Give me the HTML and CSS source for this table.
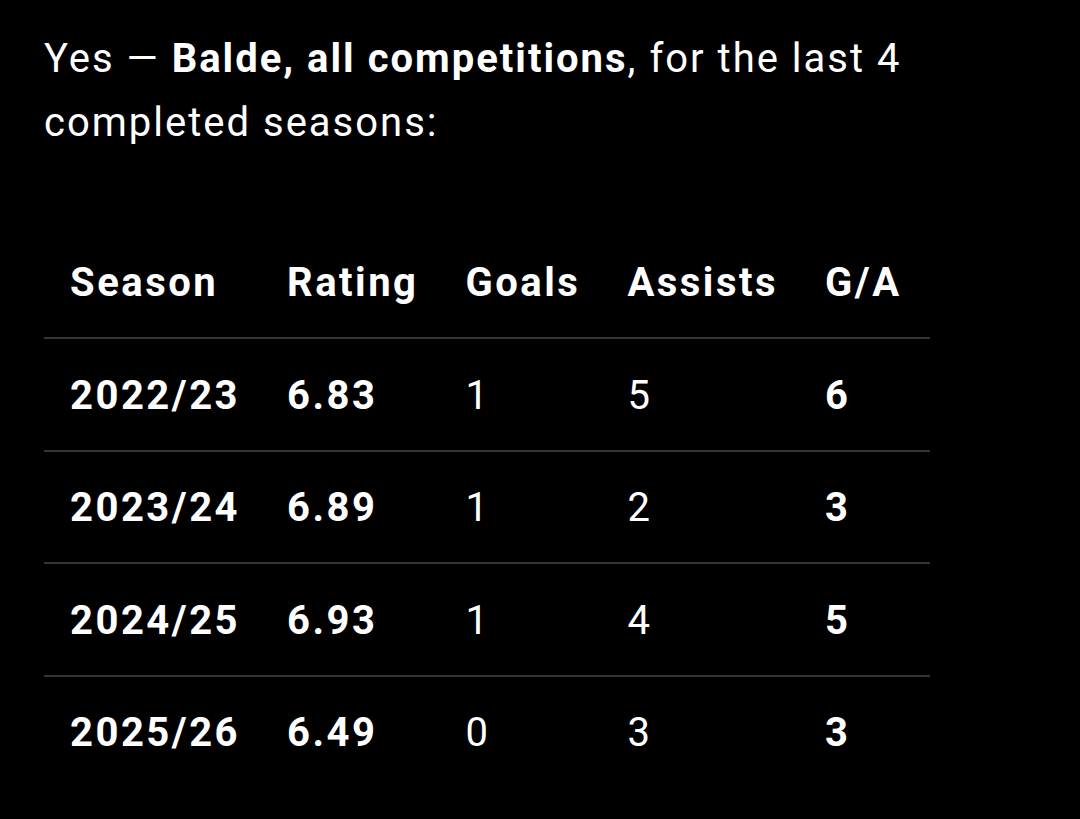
FILE: index.html
```html
<!DOCTYPE html>
<html>
<head>
<meta charset="utf-8">
<link rel="stylesheet" href="styles.css">
</head>
<body>
<div class="msg">
  <p class="intro">Yes — <strong>Balde, all competitions</strong>, for the last 4 completed seasons:</p>
  <table class="stats">
    <thead>
      <tr><th>Season</th><th>Rating</th><th>Goals</th><th>Assists</th><th>G/A</th></tr>
    </thead>
    <tbody>
      <tr><td class="b">2022/23</td><td class="b">6.83</td><td>1</td><td>5</td><td class="b">6</td></tr>
      <tr><td class="b">2023/24</td><td class="b">6.89</td><td>1</td><td>2</td><td class="b">3</td></tr>
      <tr><td class="b">2024/25</td><td class="b">6.93</td><td>1</td><td>4</td><td class="b">5</td></tr>
      <tr><td class="b">2025/26</td><td class="b">6.49</td><td>0</td><td>3</td><td class="b">3</td></tr>
    </tbody>
  </table>
</div>
</body>
</html>
```
FILE: styles.css
```css
html, body {
  margin: 0;
  padding: 0;
  background: #000;
}
body {
  color: #fff;
  font-family: Roboto, "Noto Sans", sans-serif;
  font-size: 40px;
  line-height: 64px;
  letter-spacing: 2px;
}
.msg {
  padding: 27px 44px 0 44px;
}
.intro {
  margin: 0 0 71.5px 0;
  width: 900px;
}
.intro strong {
  font-weight: 700;
}
.stats {
  border-collapse: collapse;
}
.stats th,
.stats td {
  text-align: left;
  padding: 24.5px 21px 22px 26px;
  white-space: nowrap;
}
.stats th:last-child,
.stats td:last-child {
  padding-right: 28px;
}
.stats th {
  font-weight: 700;
  letter-spacing: 2.5px;
}
.stats td {
  font-weight: 400;
}
.stats td.b {
  font-weight: 700;
  letter-spacing: 2.5px;
}
.stats thead tr,
.stats tbody tr {
  border-bottom: 2px solid #353535;
}
.stats tbody tr:last-child {
  border-bottom: none;
}
```
